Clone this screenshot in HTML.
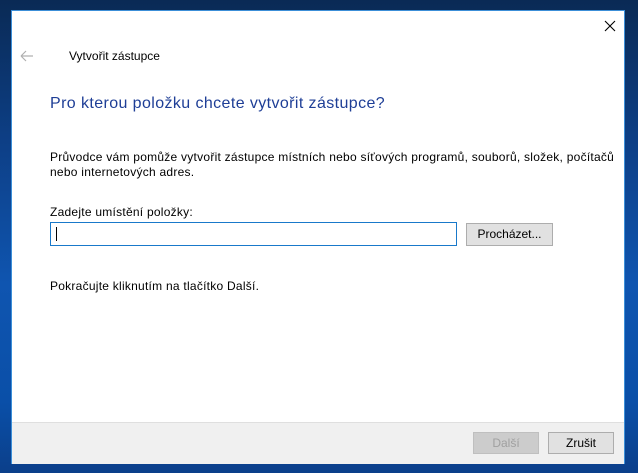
<!DOCTYPE html><html><head><style>
body{margin:0;width:638px;height:473px;overflow:hidden;position:relative;font-family:"Liberation Sans",sans-serif;
background:linear-gradient(180deg,#0a2a55 0%,#0d3f86 30%,#0f55b0 60%,#0a4fa8 85%,#0b3f8a 100%);}
.win{position:absolute;left:11px;top:10px;width:612px;height:452px;background:#fff;border:1px solid #3c8fd8;}
.t{position:absolute;color:#000;font-size:12px;white-space:nowrap}
.btn{position:absolute;background:#e1e1e1;border:1px solid #adadad;font-size:12px;text-align:center;box-sizing:border-box;line-height:20px}
</style></head><body>
<div class="win">
<svg style="position:absolute;left:7px;top:38px" width="16" height="14"><path d="M2 7H14M2 7L7 2M2 7L7 12" stroke="#b0b0b0" stroke-width="1.2" fill="none"/></svg>
<div class="t" style="left:57px;top:38px">Vytvořit zástupce</div>
<svg style="position:absolute;left:592px;top:9px" width="12" height="12"><path d="M1 1L11 11M11 1L1 11" stroke="#000" stroke-width="1.1"/></svg>
<div class="t" style="left:38px;top:84px;font-size:16px;letter-spacing:0.4px;color:#1e3e96">Pro kterou položku chcete vytvořit zástupce?</div>
<div class="t" style="left:38px;top:139px;line-height:15px;letter-spacing:0.25px">Průvodce vám pomůže vytvořit zástupce místních nebo síťových programů, souborů, složek, počítačů<br>nebo internetových adres.</div>
<div class="t" style="left:38px;top:194px;letter-spacing:0.25px">Zadejte umístění položky:</div>
<div style="position:absolute;left:38px;top:211px;width:407px;height:24px;box-sizing:border-box;border:1px solid #1979ca"><div style="position:absolute;left:5px;top:4px;width:1px;height:14px;background:#000"></div></div>
<div class="btn" style="left:454px;top:212px;width:87px;height:23px">Procházet...</div>
<div class="t" style="left:38px;top:268px;letter-spacing:0.25px">Pokračujte kliknutím na tlačítko Další.</div>
<div style="position:absolute;left:0;top:411px;width:612px;height:41px;background:#f0f0f0;border-top:1px solid #dfdfdf"></div>
<div class="btn" style="left:461px;top:421px;width:66px;height:22px;color:#a0a0a0;background:#cccccc;border-color:#bfbfbf">Další</div>
<div class="btn" style="left:536px;top:421px;width:66px;height:22px">Zrušit</div>
</div>
</body></html>
